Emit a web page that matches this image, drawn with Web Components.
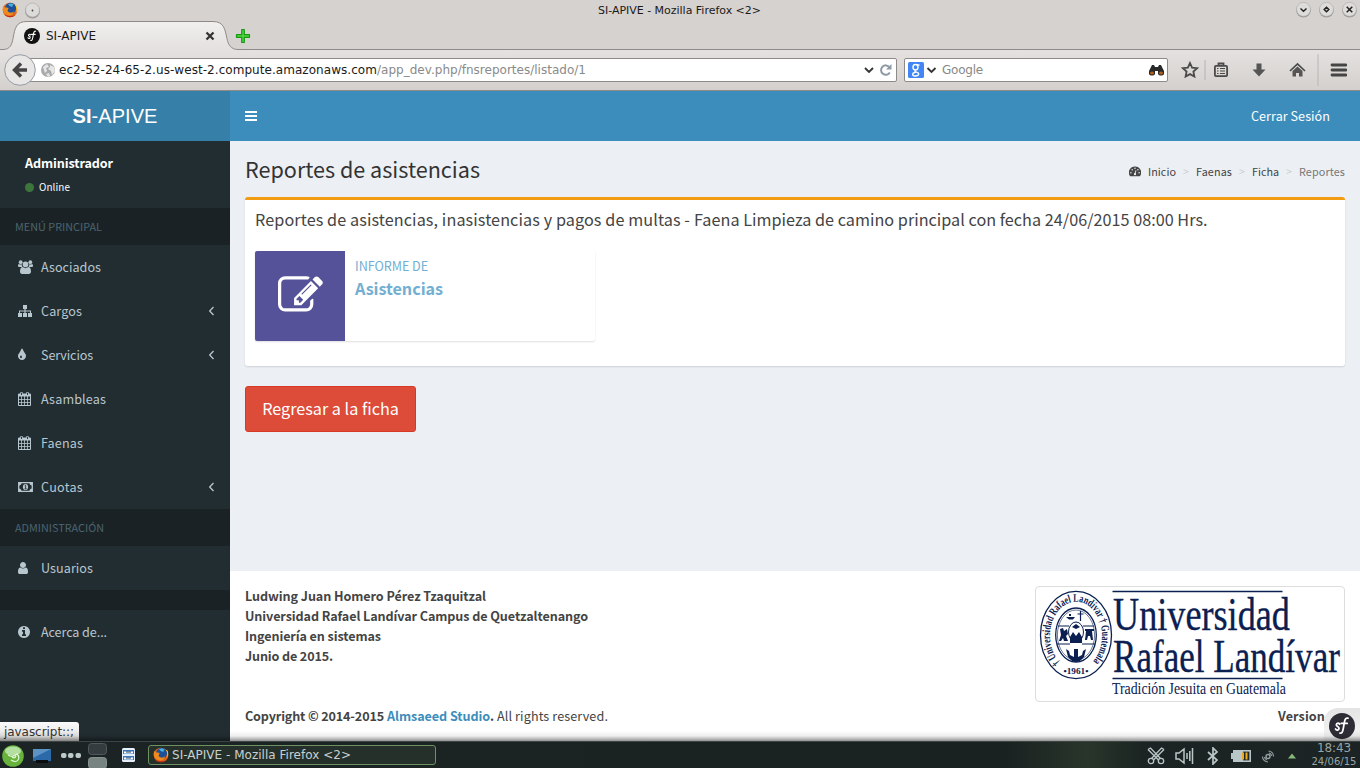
<!DOCTYPE html>
<html lang="es">
<head>
<meta charset="utf-8">
<title>SI-APIVE</title>
<style>
html,body{margin:0;height:768px;overflow:hidden}
body{font-family:"Noto Sans CJK SC","Open Sans",sans-serif;font-size:12.6px;color:#444;background:#fff}
</style>
</head>
<body>
<desktop-screen></desktop-screen>
<script>
const define = (name, markup, setup) => {
  const tpl = document.createElement('template');
  tpl.innerHTML = markup;
  customElements.define(name, class extends HTMLElement {
    constructor(){ super(); this.attachShadow({mode:'open'}).append(tpl.content.cloneNode(true)); }
    connectedCallback(){ if (setup) setup(this, this.shadowRoot); }
  });
};

define('desktop-screen', `
<style>
:host{display:grid;width:1360px;height:768px;grid-template-rows:21px 29px 41px 650px 27px;position:relative}
main{display:grid;grid-template-columns:230px 1130px;min-height:0}
.right{display:grid;grid-template-rows:50px 430px 170px}
.left{display:grid;grid-template-rows:50px 600px}
.shade{position:absolute;left:0;right:0;top:731px;height:10px;background:linear-gradient(rgba(0,0,0,0),rgba(0,0,0,.07) 50%,rgba(0,0,0,.42));z-index:3}
status-bubble{position:absolute;left:0;top:722px;z-index:2}
symfony-badge{position:absolute;left:1324px;top:708px;z-index:2}
</style>
<window-titlebar></window-titlebar><browser-tabs></browser-tabs><browser-toolbar></browser-toolbar>
<main><div class="left"><app-brand></app-brand><app-sidebar></app-sidebar></div>
<div class="right"><app-navbar></app-navbar><app-content></app-content><app-footer></app-footer></div></main>
<desktop-taskbar></desktop-taskbar>
<status-bubble></status-bubble><symfony-badge></symfony-badge><div class="shade"></div>`);

const SF = `<path d="M5.5 13.5c.8 1.6 3 1 3-.6 0-1.700-2.600-1.300-2.300-3.100.3-1.500 2.400-1.800 2.700-.3M9.300 17c1.800.6 2.300-1.400 2.800-4l1-5.500c.5-2.500 1.400-3.600 3-3.100M10.300 8.800h5.100" fill="none" stroke="#fff" stroke-width="1.500" stroke-linecap="round"/>`;
const FIREFOX = `<circle cx="8" cy="8" r="7.300" fill="#e0641a"/><circle cx="8.600" cy="6.300" r="5.500" fill="#1f4f96"/><path d="M6 2c2-1 5-.8 6 1-1.500-.3-2 .5-1 1.600-2 .4-3.500-.3-5-2.600z" fill="#48b4dd"/><path d="M1.200 3.500C1.600 5 3 5.500 4.600 5.500 6.500 5.700 7 6.600 6 7.600c-1 1.200 0 2.800 2 3 2 .2 3.300-.7 4-1.700-.2 2.900-2.500 4.800-5.200 4.600C3 13 .9 10 .7 7.500.7 6 1 4.500 1.200 3.500z" fill="#f08a1d"/><path d="M13 3c1.800 2 1.800 6 .5 8 2-1.800 2.300-5.700.6-8z" fill="#ffd42e"/><path d="M2 12c2 3.500 8 4.500 11.500 1C10.500 14.500 5 14.500 2 12z" fill="#c22b18"/>`;

define('window-titlebar', `
<style>
:host{display:grid;grid-template-columns:1fr auto 1fr;align-items:center;background:#d6d2cf;color:#1a1a1a;font:11px "DejaVu Sans",sans-serif;padding:0 3px 1px 2px}
.l{display:flex;gap:6px;align-items:center}.r{display:flex;gap:7px;justify-content:flex-end;padding-bottom:1px}
svg{display:block}
</style>
<div class="l"><svg width="16" height="16">${FIREFOX}</svg><svg width="17" height="17"><circle cx="8.500" cy="9" r="7.500" fill="#999"/><circle cx="8.500" cy="8" r="7" fill="#dddbd9" stroke="#aaa" stroke-width=".6"/><circle cx="8.500" cy="8.500" r=".9" fill="#444"/></svg></div>
<tracked-text w="163">SI-APIVE - Mozilla Firefox &lt;2&gt;</tracked-text>
<div class="r"></div>`, (h, r) => {
  r.querySelector('.r').innerHTML = ['M5.500 7.500l3 2.700 3-2.700','M8.500 6.200l2.300 2.300-2.300 2.300-2.300-2.300z','M5.700 5.700l5.600 5.600M11.300 5.700l-5.600 5.600'].map(d => `<svg width="16" height="17"><circle cx="8.500" cy="9.300" r="7.300" fill="#999"/><circle cx="8.500" cy="8.300" r="7" fill="#dedcda" stroke="#aaa" stroke-width=".6"/><path d="${d}" fill="none" stroke="#222" stroke-width="1.500"/></svg>`).join('');
});

define('browser-tabs', `
<style>
:host{display:flex;align-items:center;background:#d6d2cf;position:relative;color:#1a1a1a;font:12px/16px "DejaVu Sans",sans-serif}
.bg{position:absolute;left:0;top:0}
.tab{position:relative;display:flex;align-items:center;width:192px;margin-left:24px;gap:6px}
.tab svg:last-child{margin-left:auto}.plus{position:relative;margin-left:19px}
</style>
<svg class="bg" width="1360" height="29"><defs><linearGradient id="g" x2="0" y2="1"><stop stop-color="#f1f0ef"/><stop offset="1" stop-color="#e3e0df"/></linearGradient></defs><path d="M0 28.500h3c7 0 9-5 10-11C15 7 16 .5 27 .5h186c11 0 12 8 14 17 1 6 4 11 11 11v1H0z" fill="url(#g)"/><path d="M0 28.500h3c7 0 9-5 10-11C15 7 16 .5 27 .5h186c11 0 12 8 14 17 1 6 4 11 11 11h1122" fill="none" stroke="#8e8a87"/></svg>
<div class="tab"><svg width="16" height="16" viewBox="0 0 22 22"><circle cx="11" cy="11" r="11" fill="#111"/>${SF}</svg><tracked-text w="50">SI-APIVE</tracked-text><svg width="12" height="12"><path d="M2.500 2.500l7 7M9.500 2.500l-7 7" stroke="#333" stroke-width="2.300"/></svg></div>
<svg class="plus" width="16" height="16"><path d="M6.700 1.500h2.600v5.200h5.200v2.600H9.300v5.200H6.700V9.300H1.500V6.700h5.200z" fill="#4fd63f" stroke="#1a9a14" stroke-width="1.200" stroke-linejoin="round"/></svg>`);

define('browser-toolbar', `
<style>
:host{display:flex;align-items:center;box-sizing:border-box;background:linear-gradient(#e4e1e0,#d4d0cd);border-bottom:1px solid #8e8a87;font:12px/16px "DejaVu Sans",sans-serif;color:#1a1a1a;position:relative;padding:0 12px 0 4px}
svg{display:block;flex:none}
.back{position:relative;z-index:1}
.box{display:flex;align-items:center;box-sizing:border-box;height:24px;background:#fff;border:1px solid #8e8a87;border-radius:2px}
.url{width:877px;margin-left:-16px;padding:0 4px 0 20px}
.url .path{color:#8a8a8a}.url .end{margin-left:auto;display:flex;gap:4px;align-items:center}
.search{width:264px;margin-left:7px;padding:0 2px 0 3px;color:#888}
.search .bin{margin-left:auto}
.icons{display:flex;align-items:center;margin-left:13px;flex:1}
</style>
<svg class="back" width="32" height="32"><circle cx="16" cy="16" r="15.300" fill="#e9e7e6" stroke="#969ba5"/><path d="M23 16H11M17 9.500L10.500 16l6.500 6.500" fill="none" stroke="#454545" stroke-width="3.400"/></svg>
<div class="box url"><svg width="14" height="16"><circle cx="7" cy="8" r="7" fill="#aaa"/><path d="M2 5l4-3 2 3-3 1 1 3-2 2zM9 3l4 2 1 4-3 4-1-4-3-2 2-2zM5 12l3-1 1 3-2 1z" fill="#e6e6e6"/></svg><tracked-text w="318" style="margin-left:4px">ec2-52-24-65-2.us-west-2.compute.amazonaws.com</tracked-text><tracked-text w="209" class="path">/app_dev.php/fnsreportes/listado/1</tracked-text>
<div class="end"><svg width="13" height="16"><path d="M3 6l4 4 4-4" fill="none" stroke="#333" stroke-width="1.800"/></svg><svg width="13" height="16"><path d="M10.500 5.200a4.700 4.700 0 1 0 .3 5.300" fill="none" stroke="#8e9aa6" stroke-width="2"/><path d="M12.500 2v5.500H7z" fill="#8e9aa6"/></svg></div></div>
<div class="box search"><svg width="16" height="16"><rect width="16" height="16" rx="1.500" fill="#4285f4"/><g fill="none" stroke="#fff" stroke-width="1.400"><ellipse cx="7.500" cy="5.200" rx="2.500" ry="2.700"/><path d="M7.500 8c-1.500 1.500 0 1.800 1.500 2.300 3 1.200 1.500 3.700-1.300 3.700-4 0-4-3-.2-3.800M9 3h2.500"/></g></svg><svg width="14" height="16"><path d="M3.500 6l4 4 4-4" fill="none" stroke="#333" stroke-width="1.800"/></svg><tracked-text w="41" style="margin-left:4px">Google</tracked-text><svg class="bin" width="17" height="14"><path d="M1 8l3-6h2l1 2h3l1-2h2l3 6v3c-1 2-5 2-6 0V8H7v3c-1 2-5 2-6 0z" fill="#292929"/><ellipse cx="4" cy="10" rx="2" ry="1.600" fill="#b35e16"/><ellipse cx="13" cy="10" rx="2" ry="1.600" fill="#b35e16"/></svg></div>
<div class="icons">
<svg width="18" height="18"><path d="M9 2l2.100 4.600 5 .6-3.700 3.400 1 4.900L9 13.100l-4.400 2.400 1-4.900L1.900 7.200l5-.6z" fill="none" stroke="#4a4a4a" stroke-width="1.800"/></svg>
<svg width="2" height="20" style="margin:0 7px 0 5px"><path d="M1 0v20" stroke="#b0b3b8"/></svg>
<svg width="16" height="16"><rect x="1.900" y="3.900" width="12.200" height="10.200" rx="1" fill="none" stroke="#4a4a4a" stroke-width="1.800"/><path d="M5.500 3.500v-2h5v2" fill="none" stroke="#4a4a4a" stroke-width="1.800"/><path d="M4 6.500h1.500M7 6.500h5M4 9h1.500M7 9h5M4 11.500h1.500M7 11.500h5" stroke="#4a4a4a" stroke-width="1.100"/></svg>
<svg width="16" height="16" style="margin-left:22px"><path d="M5.500 1.500h5V7.500h4L8 14.500 1.500 7.500h4z" fill="#555"/></svg>
<svg width="17" height="16" style="margin-left:22px"><path d="M1 9l7.500-7L16 9" fill="none" stroke="#4a4a4a" stroke-width="1.700"/><path d="M3.500 9l5-4.500 5 4.500v5.500H10V11H7v3.500H3.500z" fill="#555"/></svg>
<svg width="2" height="32" style="margin-left:11px"><path d="M1 0v32" stroke="#b5b6ba"/></svg>
<svg width="17" height="16" style="margin-left:11px"><path d="M2 3h14M2 8h14M2 13h14" stroke="#454545" stroke-width="2.800" stroke-linecap="round"/></svg></div>`);

define('app-brand', `
<style>:host{display:flex;align-items:center;justify-content:center;background:#367fa9;color:#fff;font:20px/50px "Liberation Sans",sans-serif}</style>
<tracked-text w="85"><b>SI</b>-APIVE</tracked-text>`);

define('app-navbar', `
<style>:host{display:flex;align-items:center;justify-content:space-between;background:#3c8dbc;color:#fff;padding:0 30px 0 15px}svg{display:block}tracked-text{margin-top:-2px}</style>
<svg width="12" height="12"><path d="M0 2h12M0 6h12M0 10h12" stroke="#fff" stroke-width="2"/></svg><tracked-text w="79">Cerrar Sesión</tracked-text>`);

const ICONS = {
 users:['0 0 15 14','<circle cx="2.700" cy="2.200" r="1.900"/><circle cx="12.300" cy="2.200" r="1.900"/><path d="M0 5.500C0 4 1 4.200 2.500 4.600l1.300-.4C3.700 5.500 4 6.300 4.600 7H1.500C.5 7 0 6.500 0 5.500zM15 5.500C15 4 14 4.200 12.500 4.600l-1.300-.4c.1 1.300-.2 2.100-.8 2.800h3.100c1 0 1.500-.5 1.500-1.500z"/><circle cx="7.500" cy="4.400" r="2.800"/><path d="M4.800 7c1.600 1.500 3.800 1.500 5.400 0 2 0 2.800 2 2.800 4.500 0 1.500-.8 2.500-2.200 2.500H4.200C2.800 14 2 13 2 11.500 2 9 2.800 7 4.800 7z"/>'],
 sitemap:['0 0 15 14','<path d="M5 1h4v4H7.600v1.500H13V9h1v4h-4V9h2V7.500H7.600V9H9v4H5V9h1.400V7.500H2V9h2v4H0V9h1V6.500h5.400V5H5z"/>'],
 tint:['384 0 1792 1792','<path d="M896 1152q0-36-20-69-1-1-15.500-22.500t-25.500-38-25-44-21-50.500q-4-16-21-16t-21 16q-7 23-21 50.500t-25 44-25.500 38-15.500 22.500q-20 33-20 69 0 53 37.500 90.500t90.500 37.500 90.500-37.500 37.500-90.500zm512-128q0 212-150 362t-362 150-362-150-150-362q0-145 81-275 6-9 62.500-90.500t101-151 99.500-178 83-201.500q9-30 34-47t51-17 51.500 17 33.500 47q28 93 83 201.500t99.500 178 101 151 62.500 90.500q81 127 81 275z"/>'],
 calendar:['0 0 15 14','<path d="M1 2h11.500v11.500H.5V2z" fill="none" stroke="currentColor"/><path d="M0 2h13v2.500H0z"/><path d="M3.500 4v9.500M6.500 4v9.500M9.500 4v9.500M.5 7.500h12M.5 10.500h12" stroke="currentColor" stroke-width=".8"/><path d="M3.500 1v2M9.500 1v2" stroke="#222d32" stroke-width=".9"/><path d="M2.500 3.500v-3h2v3zM8.500 3.500v-3h2v3z" fill="none" stroke="currentColor" stroke-width=".7"/>'],
 money:['0 0 15 14','<path d="M.7 2.700h13.600v8.600H.7z" fill="none" stroke="currentColor" stroke-width="1.300"/><path d="M1 3h2.500C3.500 4.500 2.500 5.500 1 5.500zM14 3h-2.500c0 1.500 1 2.500 2.500 2.500zM1 11h2.500C3.500 9.500 2.500 8.500 1 8.500zM14 11h-2.500c0-1.500 1-2.500 2.500-2.500z"/><ellipse cx="7.500" cy="7" rx="2.600" ry="3.100"/><path d="M6.700 5.700l.9-.5v3.500M6.500 8.800h2.200" stroke="#222d32" fill="none" stroke-width=".9"/>'],
 user:['256 0 1792 1792','<path d="M1536 1399q0 109-62.500 187t-150.500 78h-854q-88 0-150.500-78t-62.500-187q0-85 8.500-160.500t31.500-152 58.500-131 94-89 134.500-34.500q131 128 313 128t313-128q76 0 134.500 34.500t94 89 58.500 131 31.500 152 8.500 160.500zm-256-887q0 159-112.500 271.500t-271.500 112.500-271.500-112.500-112.500-271.500 112.500-271.500 271.500-112.500 271.500 112.500 112.500 271.500z"/>'],
 info:['128 0 1792 1792','<path d="M1152 1376v-160q0-14-9-23t-23-9h-96v-512q0-14-9-23t-23-9h-320q-14 0-23 9t-9 23v160q0 14 9 23t23 9h96v320h-96q-14 0-23 9t-9 23v160q0 14 9 23t23 9h448q14 0 23-9t9-23zm-128-896v-160q0-14-9-23t-23-9h-192q-14 0-23 9t-9 23v160q0 14 9 23t23 9h192q14 0 23-9t9-23zm640 416q0 209-103 385.500t-279.500 279.500-385.500 103-385.500-103-279.500-279.500-103-385.500 103-385.500 279.500-279.500 385.500-103 385.500 103 279.500 279.500 103 385.500z"/>'],
 edit:['0 0 1792 1792','<path d="M888 1184l116-116-152-152-116 116v56h96v96h56zm440-720q-16-16-33 1l-350 350q-17 17-1 33t33-1l350-350q17-17 1-33zm80 594v190q0 119-84.500 203.500t-203.500 84.500h-832q-119 0-203.500-84.500t-84.500-203.500v-832q0-119 84.500-203.500t203.500-84.500h832q63 0 117 25 15 7 18 23 3 17-9 29l-49 49q-14 14-32 8-23-6-45-6h-832q-66 0-113 47t-47 113v832q0 66 47 113t113 47h832q66 0 113-47t47-113v-126q0-13 9-22l64-64q15-15 35-7t20 29zm-96-738l288 288-672 672h-288v-288zm444 132l-92 92-288-288 92-92q28-28 68-28t68 28l152 152q28 28 28 68t-28 68z"/>'],
 gauge:['0 0 12 11','<path d="M6 .5a6 6 0 0 1 5.200 9.200q-.3.500-.8.500H1.600q-.5 0-.8-.5A6 6 0 0 1 6 .5z"/><g fill="#ecf0f5"><circle cx="1.900" cy="6.800" r=".75"/><circle cx="3.200" cy="3.700" r=".75"/><circle cx="6" cy="2.300" r=".75"/><circle cx="8.900" cy="3.700" r=".75"/><circle cx="10.100" cy="6.800" r=".75"/></g><path d="M6 8l.9-3.600" stroke="#ecf0f5" stroke-width=".9"/><circle cx="6" cy="8.200" r="1.100" fill="#ecf0f5"/>']
};

define('side-item', `
<style>
:host{display:flex;align-items:center;height:44px;color:#b8c7ce;padding:0 15px 0 18px;box-sizing:border-box}
ui-icon{margin-right:8px}
tracked-text{margin-top:-2px}
svg{margin-left:auto;display:none}:host([sub]) svg{display:block}
</style>
<ui-icon></ui-icon><tracked-text><slot></slot></tracked-text><svg width="7" height="10"><path d="M5.500 1L1.700 5l3.800 4" fill="none" stroke="#b8c7ce" stroke-width="1.300"/></svg>`, (h, r) => {
  r.querySelector('ui-icon').setAttribute('name', h.getAttribute('icon'));
  r.querySelector('tracked-text').setAttribute('w', h.getAttribute('w'));
});

define('app-sidebar', `
<style>
:host{display:block;background:#222d32;overflow:hidden}
.user{height:67px;box-sizing:border-box;padding:13px 0 0 25px;color:#fff;display:flex;flex-direction:column;gap:8px}
.user b{line-height:18px}
.on{display:flex;align-items:center;gap:5px;font-size:9.900px;line-height:14px}
.on i{width:9px;height:9px;border-radius:50%;background:#3c763d;margin-top:1px}
.sec{height:37px;box-sizing:border-box;background:#1a2226;color:#4b646f;font-size:10.800px;line-height:36px;padding-left:15px}
.gap{height:20px;background:#1a2226}
</style>
<div class="user"><b><tracked-text w="88">Administrador</tracked-text></b><div class="on"><i></i><tracked-text w="31">Online</tracked-text></div></div>
<div class="sec"><tracked-text w="87">MENÚ PRINCIPAL</tracked-text></div>
<side-item icon="users" w="60">Asociados</side-item><side-item icon="sitemap" w="41" sub>Cargos</side-item><side-item icon="tint" w="52" sub>Servicios</side-item><side-item icon="calendar" w="65">Asambleas</side-item><side-item icon="calendar" w="42">Faenas</side-item><side-item icon="money" w="42" sub>Cuotas</side-item>
<div class="sec"><tracked-text w="89">ADMINISTRACIÓN</tracked-text></div>
<side-item icon="user" w="52">Usuarios</side-item><div class="gap"></div><side-item icon="info" w="66">Acerca de...</side-item>`);

define('info-box', `
<style>
:host{display:flex;width:340px;height:90px;background:#fff;border-radius:2px;box-shadow:0 1px 2px rgba(0,0,0,.13);color:#72afd2}
.ic{width:90px;background:#555299;color:#fff;border-radius:2px 0 0 2px;display:flex;align-items:center;justify-content:center}
ui-icon{width:45px;height:45px;margin-top:-1px}
.t{padding:5px 10px;display:flex;flex-direction:column}
.a{line-height:19px}.b{font-size:16.200px;line-height:25px;font-weight:700;margin-top:1px}
</style>
<div class="ic"><ui-icon name="edit"></ui-icon></div><div class="t"><div class="a"><tracked-text w="73">INFORME DE</tracked-text></div><div class="b"><tracked-text w="88">Asistencias</tracked-text></div></div>`);

define('app-content', `
<style>
:host{display:flex;flex-direction:column;align-items:flex-start;background:#ecf0f5;padding:13px 15px 0;box-sizing:border-box}
header{display:flex;justify-content:space-between;align-items:center;width:100%;height:30px;margin-bottom:13px}
h1{margin:0;font-size:21.600px;line-height:30px;font-weight:400;color:#333}
nav{display:flex;font-size:10.800px;line-height:16px;align-items:center;margin-top:4px}
nav i{font-style:normal;color:#ccc;width:20px;text-align:center}nav .last{color:#777}
ui-icon{width:12px;height:11px;margin:1px 7px 0 0}
section{width:100%;height:169px;box-sizing:border-box;background:#fff;border-top:3px solid #f39c12;border-radius:3px;box-shadow:0 1px 2px rgba(0,0,0,.13);padding:8px 10px}
h4{display:flex;gap:4px;margin:0 0 21px;font-size:16.200px;line-height:22px;font-weight:400}
a{margin-top:20px;box-sizing:border-box;height:46px;width:171px;background:#dd4b39;border:1px solid #d73925;border-radius:3px;color:#fff;font-size:16.200px;line-height:42px;text-align:center}
</style>
<header><h1><tracked-text w="235">Reportes de asistencias</tracked-text></h1><nav><ui-icon name="gauge"></ui-icon><tracked-text w="28">Inicio</tracked-text><i>&gt;</i><tracked-text w="36">Faenas</tracked-text><i>&gt;</i><tracked-text w="27">Ficha</tracked-text><i>&gt;</i><tracked-text class="last" w="46">Reportes</tracked-text></nav></header>
<section><h4><tracked-text w="435">Reportes de asistencias, inasistencias y pagos de multas -</tracked-text> <tracked-text w="513.5">Faena Limpieza de camino principal con fecha 24/06/2015 08:00 Hrs.</tracked-text></h4><info-box></info-box></section>
<a>Regresar a la ficha</a>`);

define('university-logo', `
<style>:host{display:block;box-sizing:border-box;width:310px;height:116px;border:1px solid #ddd;border-radius:4px;background:#fff}svg{display:block}text{font-family:"Liberation Serif",serif;fill:#0b2050}</style>
<svg width="308" height="114" viewBox="1036 587 308 114">
<g stroke="#0b2050" fill="none"><ellipse cx="1076" cy="635" rx="35.500" ry="43.700" stroke-width="1.300"/><ellipse cx="1076" cy="635" rx="20.300" ry="27" stroke-width="1.300"/><ellipse cx="1076" cy="635" rx="18.600" ry="25" stroke-width=".6"/>
<path d="M1058 626h11M1083 626h11M1057 644h13M1082 644h13" stroke-width="1.200"/><path d="M1080.500 611v10M1077.500 614h6" stroke-width="1.200"/><ellipse cx="1076" cy="632" rx="7.500" ry="10" stroke-width="1"/></g>
<g fill="#0b2050"><path d="M1066 617h9l-2 2.500h-4zM1069 614h2v2h-2zM1060 629l3-1 1 3 3-2 1 5-2 2 2 5h-4l-1-3-2 3h-2l2-6zM1085 629h9v2h-2l1 9h-2l-1-4h-2l-1 4h-2l1-9h-1zM1070 637l3-5 3 4 3-4 3 5v6h-12zM1072 627l4-3 4 3-4 2zM1066 649l3 2 1 4 4 2v-8h4v8l4-2 1-4 3-2-2 8-4 4-4 1-4-1-4-4z"/></g>
<path id="ring" d="M1060 662.500A26 34 0 1 1 1092 662.500" fill="none"/>
<text font-size="11.500" font-weight="700"><textPath href="#ring" lengthAdjust="spacingAndGlyphs">† Universidad Rafael Landívar † Guatemala</textPath></text>
<text data-x="1063.500" data-w="25" y="674" font-size="9" font-weight="700">•1961•</text>
<path d="M1112.500 591.500h170M1112.500 678.500h170" stroke="#0b2050" stroke-width="1.500"/>
<text data-x="1113" data-w="177" y="630" font-size="45.500" stroke="#0b2050" stroke-width=".35">Universidad</text>
<text data-x="1113" data-w="227" y="672.500" font-size="45.500" stroke="#0b2050" stroke-width=".35">Rafael Landívar</text>
<text data-x="1112" data-w="174" y="694" font-size="16">Tradición Jesuita en Guatemala</text></svg>`, (h, r) => {
  r.querySelectorAll('text[data-w]').forEach(t => {
    const k = t.dataset.w / t.getComputedTextLength();
    t.setAttribute('transform', `translate(${t.dataset.x} 0) scale(${k.toFixed(4)} 1)`);
  });
  r.querySelector('textPath').setAttribute('textLength', (r.querySelector('#ring').getTotalLength() - 2).toFixed(1));
});

define('app-footer', `
<style>
:host{display:flex;flex-direction:column;justify-content:space-between;background:#fff;padding:15px 15px 15px;box-sizing:border-box;line-height:20px}
.top{display:flex;justify-content:space-between}.who{display:flex;flex-direction:column;font-weight:700}
.bot{display:flex;justify-content:space-between;padding-right:20px}.bot div{display:flex}a{color:#3c8dbc}
</style>
<div class="top"><div class="who"><tracked-text w="241">Ludwing Juan Homero Pérez Tzaquitzal</tracked-text><tracked-text w="343">Universidad Rafael Landívar Campus de Quetzaltenango</tracked-text><tracked-text w="136">Ingeniería en sistemas</tracked-text><tracked-text w="88">Junio de 2015.</tracked-text></div><university-logo></university-logo></div>
<div class="bot"><div><b><tracked-text w="139">Copyright © 2014-2015</tracked-text></b><b style="margin-left:3px"><tracked-text w="107"><a>Almsaeed Studio</a>.</tracked-text></b><tracked-text w="111" style="margin-left:3px">All rights reserved.</tracked-text></div><b><tracked-text w="47">Version</tracked-text></b></div>`);

define('status-bubble', `
<style>:host{display:block;box-sizing:border-box;width:79px;height:19px;background:linear-gradient(#fafafa,#e2e0df);border-radius:0 3px 0 0;font:12px/20px "DejaVu Sans",sans-serif;color:#333;padding-left:4px}</style>
<tracked-text w="70">javascript::;</tracked-text>`);

define('symfony-badge', `
<style>:host{display:block;width:36px;height:33px;background:linear-gradient(#e4e4e4,#f6f6f6);border-radius:14px 0 0 0}svg{display:block;padding:5px 0 0 5px}</style>
<svg width="26" height="26" viewBox="0 0 22 22"><circle cx="11" cy="11" r="11" fill="#2e2c35"/>${SF}</svg>`);

define('desktop-taskbar', `
<style>
:host{display:flex;align-items:center;box-sizing:border-box;background:linear-gradient(90deg,#1c2324,#1a2221 74%,#29352a 80%,#1b2422 84%,#1c2324);border-top:1px solid #3c4444;color:#c8d0d0;font:12px/16px "DejaVu Sans",sans-serif;padding:2px 3px 0 2px;overflow:hidden}
svg{display:block;flex:none}
.task{display:flex;align-items:center;gap:3px;box-sizing:border-box;width:288px;height:20px;border:1px solid #6e9163;border-radius:3px;background:#26302a;margin:-2px 0 0 12px;padding:0 4px}
.tray{display:flex;align-items:center;margin-left:auto;gap:10px}
.clock{display:flex;flex-direction:column;align-items:center;width:46px;color:#9aa3a3;line-height:13px;margin:-2px 0 0 2px}.clock .d{font-size:10px;line-height:13px}
</style>
<svg width="22" height="22"><circle cx="11" cy="11" r="10.800" fill="#67b33c"/><ellipse cx="11" cy="6" rx="8" ry="4.500" fill="#b4dfa0"/><path d="M6 10q5 3 9-1 3 3 1 6t-7 0M10 12q3 2 4-1" stroke="#e9f7df" fill="none" stroke-width="1.200"/></svg>
<svg width="18" height="16" style="margin-left:9px"><path d="M0 1h18v12H0z" fill="#2b69a8"/><path d="M0 1h18L0 10z" fill="#5a93c4"/><path d="M3 12h12v3H3z" fill="#0a0d10"/></svg>
<svg width="22" height="6" style="margin-left:9px"><g fill="#bccaca"><rect x="1" width="5.500" height="5" rx="2"/><rect x="8" width="5.500" height="5" rx="2"/><rect x="15.500" width="5.500" height="5" rx="2"/></g></svg>
<svg width="20" height="26" style="margin-left:6px"><rect x=".5" y=".5" width="18" height="11" rx="3" fill="#343c40" stroke="#50595d"/><rect x=".5" y="14.500" width="18" height="11" rx="3" fill="#788481" stroke="#88928f"/></svg>
<svg width="15" height="16" style="margin:-2px 0 0 13px"><rect x="1" y="1" width="13" height="14" rx="1.500" fill="#e6f0fa"/><path d="M2 3h11v4H2zM2 9h11v4H2z" fill="#3478c6"/><path d="M3 4.500h9v2H3zM3 10.500h9v2H3z" fill="#fff"/><path d="M5 5h5M5 11h5" stroke="#345"/></svg>
<div class="task"><svg width="16" height="16">${FIREFOX}</svg><tracked-text w="179">SI-APIVE - Mozilla Firefox &lt;2&gt;</tracked-text></div>
<div class="tray">
<svg width="18" height="18" fill="none" stroke="#b9c6c8" stroke-width="1.300"><path d="M1 2.500L3.500 1l10 10.500M17 2.500L14.500 1l-10 10.500M1 2.500L11.500 13M17 2.500L6.500 13"/><circle cx="4" cy="14" r="2.700"/><circle cx="14" cy="14" r="2.700"/></svg>
<svg width="19" height="18" fill="none" stroke="#b9c6c8" stroke-width="1.500"><path d="M1 6h3l5-4v14l-5-4H1zM12 6v6M14.800 4v10M17.500 1v16"/></svg>
<svg width="18" height="18" fill="none" stroke="#b9c6c8" stroke-width="1.700"><path d="M4 5l9 8-4 4V1l4 4-9 8"/></svg>
<svg width="20" height="16" style="margin-left:-1px"><path d="M0 5h2v6H0z" fill="#b9c6c8"/><rect x="2.800" y="2.800" width="16.400" height="10.400" fill="#202828" stroke="#b9c6c8" stroke-width="1.600"/><path d="M3 3h9v10H3z" fill="#b9c6c8"/><path d="M11 4.500h2v7h-2zM14.500 4.500h2v7h-2z" fill="#f0ab1d"/></svg>
<svg width="14" height="16" viewBox="0 0 14 16" fill="none" stroke="#929e9f" stroke-width="1.400"><circle cx="7" cy="8.500" r="2"/><path d="M1.500 8.500a5.500 5.500 0 0 0 5.500 5.500M3.500 9a3.500 3.500 0 0 0 2.500 3M7.500 3a5.500 5.500 0 0 1 5 5.500M8 5a3.500 3.500 0 0 1 2.500 3" stroke-width="1.200"/></svg>
<svg width="14" height="14"><path d="M3 9.500l4-5 4 5z" fill="#85b878"/></svg>
<div class="clock"><tracked-text w="34">18:43</tracked-text><tracked-text class="d" w="45">24/06/15</tracked-text></div></div>`);

define('ui-icon', `<style>:host{display:block;width:15px;height:14px}svg{display:block;width:100%;height:100%;fill:currentColor}</style><svg preserveAspectRatio="xMinYMid meet"></svg>`, (h, r) => {
  const s = r.querySelector('svg'), i = ICONS[h.getAttribute('name')];
  s.setAttribute('viewBox', i[0]); s.innerHTML = i[1];
});

/* Inline text set to a given width by spreading the difference over its letters. */
define('tracked-text', `<style>:host{display:inline-block;white-space:nowrap;width:max-content}</style><slot></slot>`, (h, r) => {
  const w = parseFloat(h.getAttribute('w'));
  if (!w) return;
  const text = r.querySelector('slot').assignedNodes({flatten:true}).map(n => n.textContent).join('');
  h.style.letterSpacing = '0';
  const diff = w - h.getBoundingClientRect().width;
  h.style.letterSpacing = (diff / text.trim().length).toFixed(3) + 'px';
});
</script>
</body>
</html>
